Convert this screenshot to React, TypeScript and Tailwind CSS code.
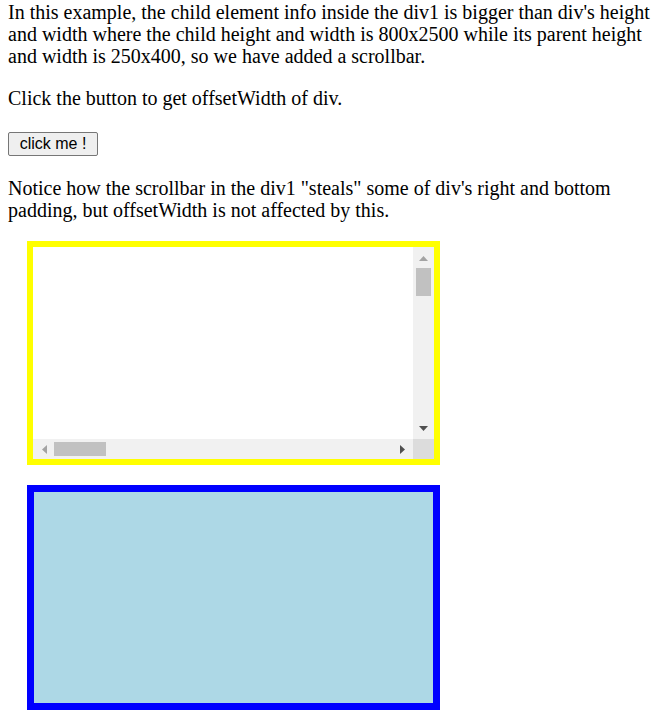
import React from 'react';

const VScrollbar = () => (
  <div className="flex flex-col w-[21px] bg-[#f1f1f1]">
    <div className="h-[21px] flex items-center justify-center">
      <svg width="9" height="6" viewBox="0 0 9 6"><path d="M0 6 L4.5 1 L9 6 Z" fill="#a3a3a3" /></svg>
    </div>
    <div className="mx-[3px] h-[28px] bg-[#c1c1c1]" />
    <div className="flex-1" />
    <div className="h-[21px] flex items-center justify-center">
      <svg width="9" height="6" viewBox="0 0 9 6"><path d="M0 0 L4.5 5 L9 0 Z" fill="#505050" /></svg>
    </div>
  </div>
);

const HScrollbar = () => (
  <div className="flex h-[20px] bg-[#f1f1f1]">
    <div className="w-[21px] flex items-center justify-center">
      <svg width="6" height="9" viewBox="0 0 6 9"><path d="M6 0 L1 4.5 L6 9 Z" fill="#a3a3a3" /></svg>
    </div>
    <div className="my-[3px] w-[52px] bg-[#c1c1c1]" />
    <div className="flex-1" />
    <div className="w-[21px] flex items-center justify-center">
      <svg width="6" height="9" viewBox="0 0 6 9"><path d="M0 0 L5 4.5 L0 9 Z" fill="#505050" /></svg>
    </div>
  </div>
);

export default function App() {
  return (
    <div className="min-h-screen bg-white px-[8px] pt-[1px] text-black font-['Liberation_Serif','Times_New_Roman',serif] text-[20px] leading-[22px] whitespace-nowrap">
      <p>
        In this example, the child element info inside the div1 is bigger than div's height
        <br />
        and width where the child height and width is 800x2500 while its parent height
        <br />
        and width is 250x400, so we have added a scrollbar.
      </p>
      <p className="mt-[20px]">Click the button to get offsetWidth of div.</p>
      <div className="mt-[23px] flex">
        <button className="h-[24px] w-[90px] rounded-[2px] border border-[#767676] bg-[#efefef] font-['Liberation_Sans',Arial,sans-serif] text-[16px] leading-none text-black">
          click me !
        </button>
      </div>
      <p className="mt-[21px]">
        Notice how the scrollbar in the div1 "steals" some of div's right and bottom
        <br />
        padding, but offsetWidth is not affected by this.
      </p>

      <div className="mt-[20px] ml-[19px] w-[413px] h-[224px] border-[6px] border-[#ffff00] bg-white flex flex-col">
        <div className="flex flex-1">
          <div className="flex-1" />
          <VScrollbar />
        </div>
        <div className="flex">
          <div className="flex-1">
            <HScrollbar />
          </div>
          <div className="w-[21px] h-[20px] bg-[#dcdcdc]" />
        </div>
      </div>

      <div className="mt-[20px] ml-[19px] w-[413px] h-[225px] border-[7px] border-[#0000ff] bg-[#add8e6]" />
    </div>
  );
}
